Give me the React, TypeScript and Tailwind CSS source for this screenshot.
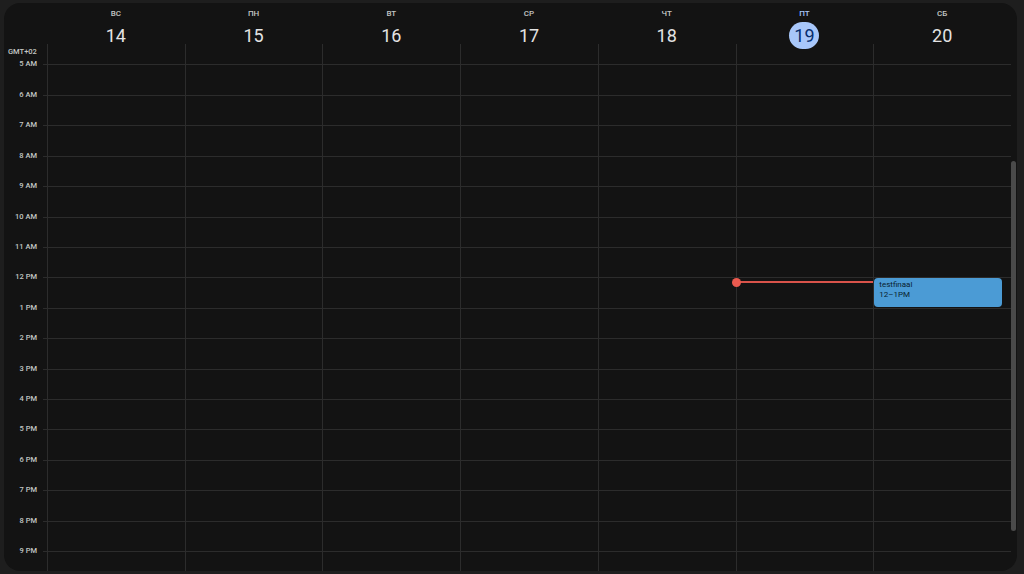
import React from "react"

const days = [
  { name: "ВС", num: 14 },
  { name: "ПН", num: 15 },
  { name: "ВТ", num: 16 },
  { name: "СР", num: 17 },
  { name: "ЧТ", num: 18 },
  { name: "ПТ", num: 19, today: true },
  { name: "СБ", num: 20 },
]

// 4 AM is scrolled half out of view, 10 PM is below the fold
const hours = ["4 AM", "5 AM", "6 AM", "7 AM", "8 AM", "9 AM", "10 AM", "11 AM", "12 PM", "1 PM", "2 PM", "3 PM", "4 PM", "5 PM", "6 PM", "7 PM", "8 PM", "9 PM", "10 PM"]
const hidden = ["4 AM", "10 PM"]

export default function App() {
  return (
    <div className="h-[574px] w-[1024px] overflow-hidden bg-[#1e1e1e] pl-[4px] pr-[7px] pt-[3px]" style={{ fontFamily: "Roboto, 'Noto Sans', Arial, sans-serif" }}>
      <div className="flex h-[568px] flex-col overflow-hidden rounded-[16px] bg-[#131313]">
        {/* header */}
        <div className="flex h-[41px] shrink-0">
          <div className="w-[43px] shrink-0" />
          {days.map((d) => (
            <div key={d.num} className="flex flex-1 flex-col items-center">
              <div className={`mt-[5px] text-[8px] font-medium leading-[12px] ${d.today ? "text-[#a8c7fa]" : "text-[#c4c7c5]"}`}>{d.name}</div>
              {d.today ? (
                <div className="mt-[2px] flex h-[30px] w-[30px] items-center justify-center rounded-full bg-[#a8c7fa] text-[18px] text-[#062e6f]">{d.num}</div>
              ) : (
                <div className="mt-[2px] flex h-[30px] items-center text-[18px] text-[#e3e3e3]">{d.num}</div>
              )}
            </div>
          ))}
          <div className="w-[6px] shrink-0" />
        </div>

        {/* body */}
        <div className="flex min-h-0 flex-1">
          <div className="relative min-h-0 flex-1 overflow-hidden">
            <div className="absolute left-[4px] top-[2px] z-10 text-[7.5px] font-medium text-[#c4c7c5]">GMT+02</div>
            <div className="mt-[-10px] flex">
              {/* time labels */}
              <div className="w-[43px] shrink-0">
                {hours.map((h) => (
                  <div key={h} className="relative h-[30.43px]">
                    {!hidden.includes(h) && (
                      <span className="absolute right-[10px] top-[-6px] text-[7.5px] font-medium leading-[12px] text-[#c4c7c5]">{h}</span>
                    )}
                    <div className="absolute right-0 top-0 h-px w-[4px] bg-[#2c2c2c]" />
                  </div>
                ))}
              </div>
              {/* day columns */}
              {days.map((d, i) => (
                <div key={d.num} className="relative flex-1 border-l border-[#2c2c2c]">
                  {hours.map((h) => (
                    <div key={h} className="h-[30.43px] border-t border-[#2c2c2c]" />
                  ))}
                  {i === 5 && (
                    <div className="absolute left-[-1px] right-0 top-[247px] z-10 h-[2px] bg-[#d9534a]">
                      <div className="absolute left-[-4px] top-[-3.5px] h-[9px] w-[9px] rounded-full bg-[#ea5a4f]" />
                    </div>
                  )}
                  {i === 6 && (
                    <div className="absolute left-0 right-[9px] top-[243.5px] z-20 h-[29px] rounded-[4px] bg-[#4b9bd5] px-[5px] pt-[2px] text-[8px] leading-[10px] text-[#0a1e2e]">
                      <div>testfinaal</div>
                      <div>12–1PM</div>
                    </div>
                  )}
                </div>
              ))}
            </div>
          </div>
          {/* scrollbar */}
          <div className="relative w-[6px] shrink-0">
            <div className="absolute left-[0px] top-[117px] h-[370px] w-[5px] rounded-full bg-[#4a4a4a]" />
          </div>
        </div>
      </div>
    </div>
  )
}
